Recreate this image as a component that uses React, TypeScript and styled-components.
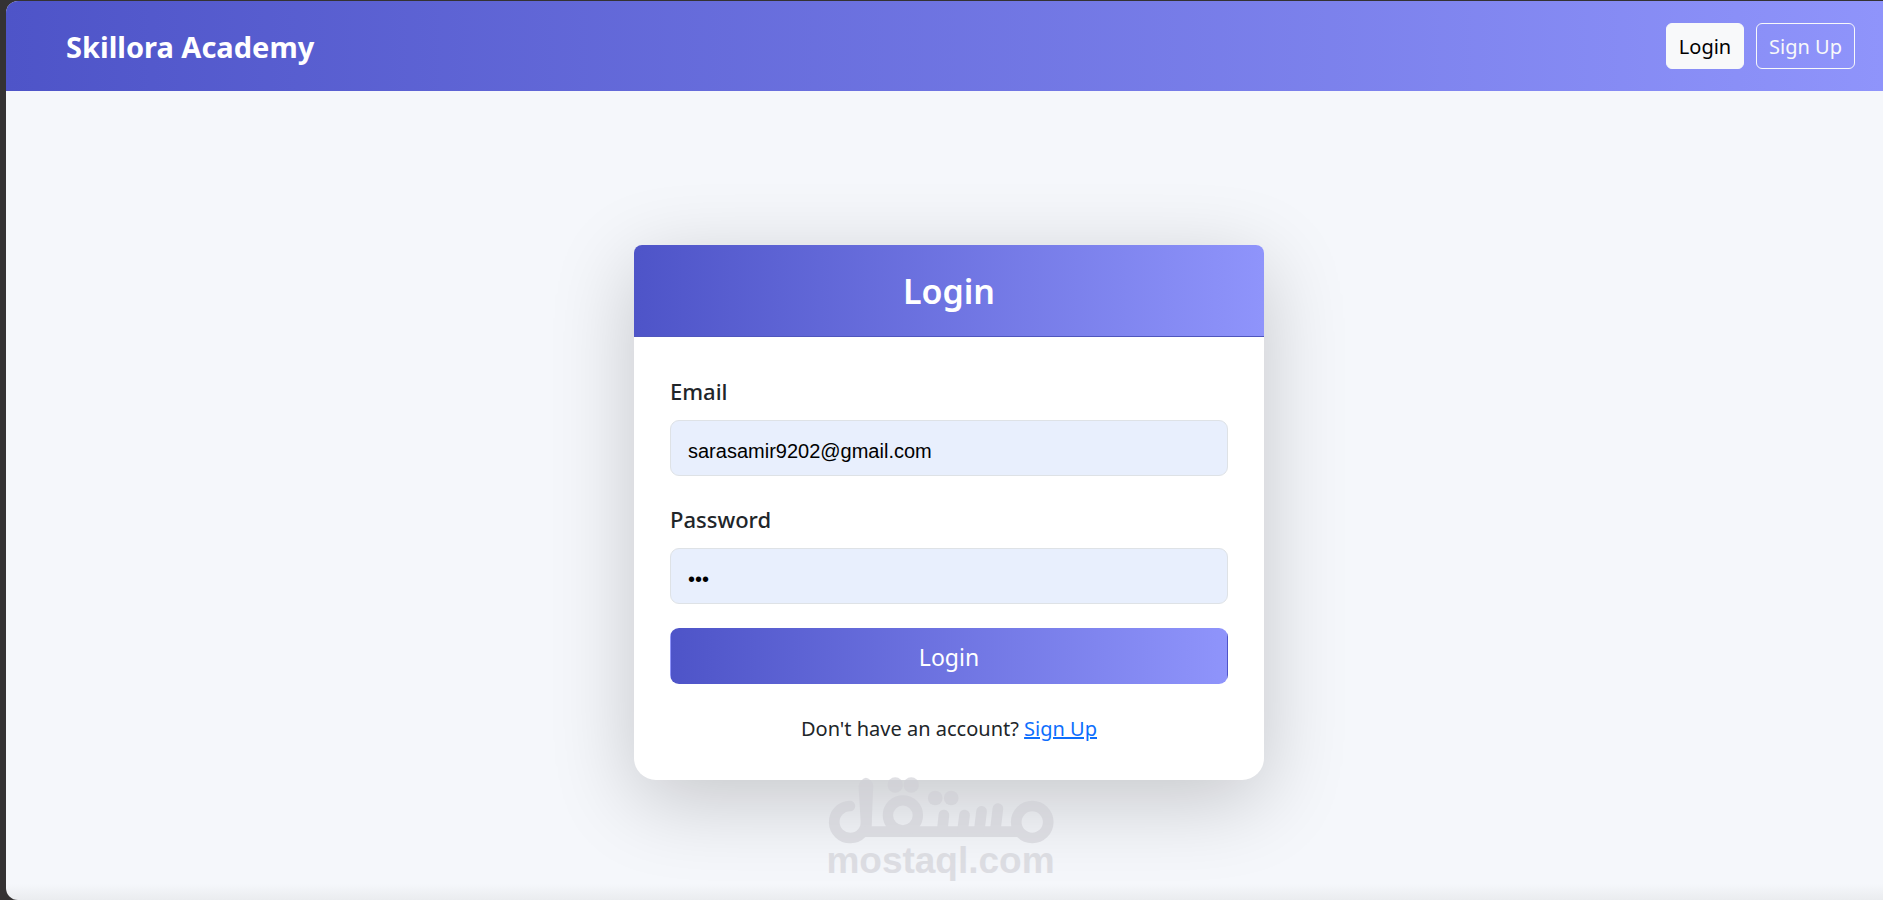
import React, { useState } from "react";
import styled, { createGlobalStyle, css } from "styled-components";

const GlobalStyle = createGlobalStyle`
  *, *::before, *::after { box-sizing: border-box; }
  body {
    margin: 0;
    background: #343233;
    color: #212529;
    font-family: "Noto Sans", "Open Sans", sans-serif;
    font-size: 20px;
    line-height: 30px;
  }
`;

const brandGradient = "linear-gradient(90deg, #4e54c8, #8f94fb)";

const Shell = styled.div`
  position: relative;
  display: flex;
  flex-direction: column;
  min-height: calc(100vh - 1px);
  margin: 1px 0 0 6px;
  overflow: hidden;
  border-radius: 12px 0 0 12px;
  background: linear-gradient(to top, #eaecef, #f5f7fb 16px);
`;

const Navbar = styled.header`
  display: flex;
  align-items: center;
  justify-content: space-between;
  height: 90px;
  padding: 0 28px 0 60px;
  background: ${brandGradient};
`;

const Brand = styled.a`
  padding-top: 2px;
  color: #fff;
  font-size: 29px;
  font-weight: 700;
  line-height: 36px;
  text-decoration: none;
`;

const NavActions = styled.nav`
  display: flex;
  gap: 12px;
`;

const NavButton = styled.button<{ $outline?: boolean; $width: number }>`
  width: ${({ $width }) => $width}px;
  height: 46px;
  padding: 1px 0 0;
  border: 1px solid #f8f9fa;
  border-radius: 6px;
  background: #f8f9fa;
  color: #000;
  font: inherit;
  cursor: pointer;
  ${({ $outline }) =>
    $outline &&
    css`
      background: transparent;
      color: #f8f9fa;
    `}
`;

const Main = styled.main`
  display: flex;
  flex: 1;
  align-items: flex-start;
  justify-content: center;
  padding: 154px 0 40px 9px;
`;

const Card = styled.section`
  width: 100%;
  max-width: 630px;
  border-radius: 8px 8px 22px 22px;
  background: #fff;
  box-shadow: 0 20px 84px rgba(0, 0, 0, 0.2);
`;

const CardHeader = styled.div`
  padding: 24px 36px 23px;
  border-bottom: 1px solid #4f56bd;
  border-radius: 8px 8px 0 0;
  background: ${brandGradient};
  color: #fff;
  text-align: center;
`;

const Title = styled.h1`
  margin: 0;
  font-size: 34px;
  font-weight: 600;
  line-height: 44px;
`;

const Form = styled.form`
  padding: 38px 36px 36px;
`;

const Field = styled.div`
  display: flex;
  flex-direction: column;
  gap: 13px;
  & + & { margin-top: 27px; }
`;

const Label = styled.label`
  font-size: 22px;
  font-weight: 500;
  line-height: 32px;
`;

const Input = styled.input`
  height: 56px;
  padding: 6px 17px 0;
  border: 1px solid #dee2e6;
  border-radius: 9px;
  outline: 0;
  background: #e8effd;
  color: #000;
  font-family: "Liberation Sans", Arial, sans-serif;
  font-size: 20px;
`;

const Submit = styled.button`
  display: block;
  width: 100%;
  height: 56px;
  margin-top: 24px;
  padding: 2px 0 0;
  border: 1px solid transparent;
  border-radius: 9px;
  background: ${brandGradient};
  color: #fff;
  font: inherit;
  font-size: 23px;
  cursor: pointer;
`;

const Prompt = styled.p`
  margin: 30px 0 0;
  text-align: center;
`;

const Link = styled.a`
  color: #0d6efd;
  text-decoration: underline;
`;

const Watermark = styled.div`
  position: absolute;
  bottom: 22px;
  left: calc(50% - 4px);
  display: flex;
  flex-direction: column;
  align-items: center;
  transform: translateX(-50%);
  opacity: 0.65;
  color: #d0d0d6;
  font-family: "Liberation Sans", Arial, sans-serif;
  font-size: 37px;
  font-weight: 700;
  line-height: 34px;
  pointer-events: none;
`;

const WatermarkLogo = () => (
  <svg width="226" height="67" viewBox="54 38 678 201" fill="none" aria-hidden="true">
    <g stroke="currentColor" strokeLinecap="round">
      <path d="M120 125A48 48 0 1 0 169 172" strokeWidth="32" />
      <path d="M165 202H625" strokeWidth="32" strokeLinecap="butt" />
      <circle cx="279" cy="153" r="45" strokeWidth="31" />
      <circle cx="667" cy="173" r="48" strokeWidth="32" />
      <path
        d="M402 152L397 200M464 152L458 200M515 141L508 200M564 133L556 200"
        strokeWidth="32"
      />
    </g>
    <g fill="currentColor">
      <path d="M146 66Q148 54 155 48Q168 32 182 48Q190 54 190 66L185 188L153 184Z" />
      <circle cx="256" cy="62" r="23" />
      <circle cx="304" cy="62" r="23" />
      <circle cx="376" cy="101" r="22" />
      <circle cx="424" cy="101" r="22" />
    </g>
  </svg>
);

export default function App() {
  const [email, setEmail] = useState("sarasamir9202@gmail.com");
  const [password, setPassword] = useState("123");

  return (
    <>
      <GlobalStyle />
      <Shell>
        <Navbar>
          <Brand href="#">Skillora Academy</Brand>
          <NavActions>
            <NavButton type="button" $width={78}>Login</NavButton>
            <NavButton type="button" $width={99} $outline>Sign Up</NavButton>
          </NavActions>
        </Navbar>
        <Main>
          <Card>
            <CardHeader>
              <Title>Login</Title>
            </CardHeader>
            <Form onSubmit={(event) => event.preventDefault()}>
              <Field>
                <Label htmlFor="email">Email</Label>
                <Input
                  id="email"
                  type="email"
                  value={email}
                  onChange={(event) => setEmail(event.target.value)}
                />
              </Field>
              <Field>
                <Label htmlFor="password">Password</Label>
                <Input
                  id="password"
                  type="password"
                  value={password}
                  onChange={(event) => setPassword(event.target.value)}
                />
              </Field>
              <Submit type="submit">Login</Submit>
              <Prompt>
                Don't have an account? <Link href="#signup">Sign Up</Link>
              </Prompt>
            </Form>
          </Card>
        </Main>
        <Watermark>
          <WatermarkLogo />
          mostaql.com
        </Watermark>
      </Shell>
    </>
  );
}
